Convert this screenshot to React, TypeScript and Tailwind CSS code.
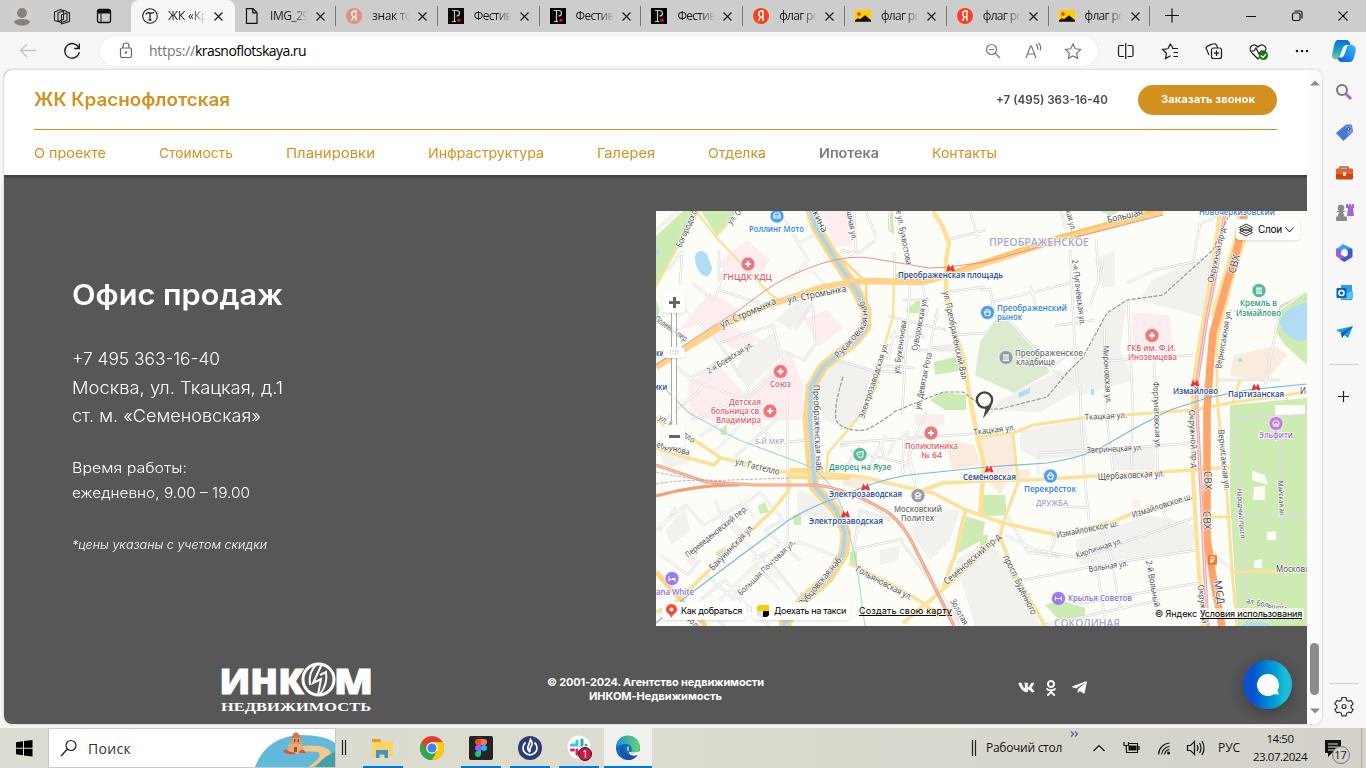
import { useLayoutEffect, useRef } from 'react';
import type { ReactNode } from 'react';
import { FaVk, FaOdnoklassniki, FaTelegramPlane } from 'react-icons/fa';

/* Text set to a given line width by spreading the letters */
function Fit({ w, children, className = '' }: { w: number; children: string; className?: string }) {
  const ref = useRef<HTMLSpanElement>(null);
  useLayoutEffect(() => {
    const el = ref.current;
    if (!el) return;
    const apply = () => {
      el.style.letterSpacing = '0px';
      el.style.letterSpacing = `${(w - el.getBoundingClientRect().width) / children.length}px`;
    };
    apply();
    document.fonts.ready.then(apply);
  }, [w, children]);
  return <span ref={ref} className={`inline-block whitespace-nowrap ${className}`}>{children}</span>;
}

/* Text set to a given line width by widening the letters themselves */
function Wide({ w, children, className = '' }: { w: number; children: string; className?: string }) {
  const ref = useRef<HTMLSpanElement>(null);
  useLayoutEffect(() => {
    const el = ref.current;
    if (!el) return;
    const apply = () => {
      el.style.transform = 'none';
      el.style.marginRight = '0px';
      const own = el.getBoundingClientRect().width;
      el.style.transform = `scaleX(${w / own})`;
      el.style.marginRight = `${w - own}px`;
    };
    apply();
    document.fonts.ready.then(apply);
  }, [w, children]);
  return (
    <span className={`flex ${className}`}>
      <span ref={ref} className="inline-block origin-left whitespace-nowrap">{children}</span>
    </span>
  );
}

const Cross = ({ s = 9 }: { s?: number }) => (
  <svg width={s} height={s} viewBox="0 0 9 9" className="shrink-0"><path d="M.5 .5l8 8M8.5 .5l-8 8" stroke="#1b1b1b" strokeWidth="1.2" /></svg>
);

const FavT = () => (
  <svg width="16" height="16" viewBox="0 0 16 16"><circle cx="8" cy="8" r="7.3" fill="none" stroke="#222" strokeWidth="1.1" /><path d="M4 6.500c.5-2 2-2 4-1.500s3 .5 4-1M8 5.500V12M6.500 12h3" fill="none" stroke="#222" strokeWidth="1.300" /></svg>
);
const FavFile = () => (
  <svg width="16" height="16" viewBox="0 0 16 16"><path d="M2.500.7h6.500l4 4v10.600h-10.500zM8.800.7v4.200H13" fill="none" stroke="#111" strokeWidth="1.200" /></svg>
);
const FavYa = ({ dim = false }: { dim?: boolean }) => (
  <svg width="16" height="16" viewBox="0 0 16 16"><circle cx="8" cy="8" r="8" fill={dim ? '#e0917f' : '#fc3f1d'} /><path d="M9.900 13V3H8.600C6.700 3 5.700 4.200 5.700 5.900c0 1.400.6 2.200 1.800 3L5.300 13M7.500 8.900h2.400" fill="none" stroke={dim ? '#eee' : '#fff'} strokeWidth="1.500" /></svg>
);
const FavP = () => (
  <svg width="16" height="16" viewBox="0 0 16 16"><path fill="#000" d="M0 0h16v16H0z" /><path d="M6.500 2.500v11M4 2.500h4.500c4 0 4 5.500 0 5.500M4 13.500h4" fill="none" stroke="#ccc" strokeWidth="1.200" /><circle cx="11" cy="12.300" r="1.700" fill="#f01010" /></svg>
);
const FavImg = () => (
  <svg width="16" height="16" viewBox="0 0 16 16"><path fill="#fc0" d="M0 2h16v12H0z" /><path d="M0 13.800v-1.500l3-2 2 1 5-4 6 5v1.500z" fill="#111" /><circle cx="4" cy="6" r="1.700" fill="#f02a10" /></svg>
);

const tabs: { icon: ReactNode; t: string; w: number }[] = [
  { icon: <FavYa dim />, t: 'знак то', w: 40 },
  { icon: <FavP />, t: 'Фестив', w: 38 },
  { icon: <FavP />, t: 'Фестив', w: 38 },
  { icon: <FavP />, t: 'Фестив', w: 38 },
  { icon: <FavYa />, t: 'флаг ро', w: 40 },
  { icon: <FavImg />, t: 'флаг ро', w: 40 },
  { icon: <FavYa />, t: 'флаг ро', w: 40 },
  { icon: <FavImg />, t: 'флаг ро', w: 40 },
];

function TabLabel({ t, w }: { t: string; w: number }) {
  return (
    <span className="w-[38px] overflow-hidden bg-gradient-to-r from-[#1b1b1b] from-60% to-transparent bg-clip-text text-[12px] leading-5 text-transparent">
      <Fit w={w}>{t}</Fit>
    </span>
  );
}

function TabStrip() {
  return (
    <div className="flex h-8 items-center bg-[#cdcdcd]">
      <svg width="131" height="32" viewBox="0 0 131 32" className="shrink-0">
        <circle cx="22" cy="16" r="10.500" fill="#d3cfcb" /><circle cx="22" cy="13" r="5" fill="#87827e" /><path d="M14 22c0-4 16-4 16 0-3 5-13 5-16 0z" fill="#87827e" />
        <g fill="#cdcdcd" stroke="#222" strokeWidth="1.100" strokeLinejoin="round"><path d="M54.500 12l6-2.500 3 1v9l-6 2-3-1zM58 13l6-2.500 3 1v9l-6 2-3-1zM61.500 14.500l8-2v9l-8 2.500z" /></g>
        <rect x="97.500" y="9.500" width="13" height="13" rx="2" fill="none" stroke="#111" strokeWidth="1.300" /><path d="M97 10h14v3.500H97z" fill="#111" /><path d="M101 13v9" stroke="#111" />
      </svg>
      <div className="flex h-8 w-[104px] shrink-0 items-center rounded-t-lg bg-[#f7f7f7] pl-[11px]">
        <FavT /><span className="w-[10px]" /><TabLabel t="ЖК «Кр" w={40} /><span className="w-2" /><Cross />
      </div>
      <div className="flex h-8 w-[100px] shrink-0 items-center pl-[9px]">
        <FavFile /><span className="w-[10px]" /><TabLabel t="IMG_29" w={39} /><span className="w-[8px]" /><Cross />
      </div>
      {tabs.map((tab, i) => (
        <div key={i} className="flex h-8 w-[101.800px] shrink-0 items-center">
          <span className="h-5 w-px bg-[#777]" /><span className="w-[10px]" />{tab.icon}<span className="w-[10px]" /><TabLabel t={tab.t} w={tab.w} /><span className="w-2" /><Cross />
        </div>
      ))}
      <span className="h-5 w-px bg-[#777]" />
      <svg width="216" height="32" viewBox="1150 0 216 32" className="shrink-0" fill="none" stroke="#111" strokeWidth="1.200">
        <path d="M1165 15.500h14M1172 8.500v14M1246 16.500h10M1338.500 11.500l9 9M1347.500 11.500l-9 9" />
        <rect x="1292.500" y="13" width="7.500" height="7.500" rx="1.500" /><path d="M1294.500 11h5.500c1.500 0 2 .5 2 2v5.500" />
      </svg>
    </div>
  );
}

const Copilot = () => (
  <>
    <path d="M1338 40h8c3 0 4 2 4.500 5h-4c-2 0-3 1-4 4l-3 8c-1 2-2 2.500-3.500 2.500-4 0-4.500-3-3.500-7 1.500-6 2-12.500 5.500-12.500z" fill="url(#cpA)" />
    <path d="M1350 62h-8c-3 0-4-2-4.500-4.500h3c2.500 0 3.500-1.500 4.500-4.500l2-6c.7-1.500 2-2 3.500-2 4.500 0 6 2.500 5 7-1.500 6-2.500 10-5.500 10z" fill="url(#cpB)" />
    <defs>
      <linearGradient id="cpA" x1="0" y1="0" x2="0" y2="1"><stop offset="0" stopColor="#0b6cd8" /><stop offset=".55" stopColor="#19a7c8" /><stop offset="1" stopColor="#7ed37e" /></linearGradient>
      <linearGradient id="cpB" x1="0" y1="1" x2="1" y2="0"><stop offset="0" stopColor="#0a55e0" /><stop offset="1" stopColor="#31c3f4" /></linearGradient>
    </defs>
  </>
);

function Toolbar() {
  return (
    <div className="flex h-[38px] items-center bg-[#f7f7f7]">
      <svg width="100" height="38" viewBox="0 32 100 38" className="shrink-0" fill="none" strokeWidth="1.300">
        <path d="M21 50.500h15M27 44l-6.500 6.500L27 57" stroke="#c4c4c4" />
        <path d="M79 48.500a7.300 7.300 0 1 0 .3 3.500M79.300 43.500v5h-5" stroke="#1b1b1b" />
      </svg>
      <div className="flex h-[30px] w-[998px] shrink-0 items-center rounded-full bg-white shadow-[0_0_2px_#ddd]">
        <svg width="49" height="30" viewBox="100 36 49 30" className="shrink-0" fill="none" stroke="#666" strokeWidth="1.200"><rect x="120.500" y="48" width="11" height="9.500" rx="1.500" /><path d="M123 48v-2a3 3 0 0 1 6 0v2" /><circle cx="126" cy="52.500" r=".6" fill="#444" /></svg>
        <span className="flex text-[14px] leading-5 text-[#777]"><Fit w={46}>https://</Fit><Fit w={111} className="text-black">krasnoflotskaya.ru</Fit></span>
        <svg width="113" height="30" viewBox="985 36 113 30" className="ml-auto shrink-0" fill="none" stroke="#777" strokeWidth="1.200">
          <circle cx="991.500" cy="49.500" r="5" /><path d="M995 53l5 5M989 49.500h5" />
          <path d="M1026 58l4.500-12h1l4.500 12M1028 54h7M1036 44c2 2 2 4 1.500 5.500M1038.500 43c2.500 2.500 2.500 5.500 1.500 7.500" />
          <path d="M1073 44l2.300 4.800 5.200.7-3.800 3.700.9 5.200-4.600-2.500-4.600 2.500.9-5.200-3.800-3.700 5.200-.7z" />
        </svg>
      </div>
      <svg width="268" height="38" viewBox="1098 32 268 38" className="shrink-0" fill="none" stroke="#1b1b1b" strokeWidth="1.200">
        <path d="M1124 45.500h-4c-1 0-1.500.5-1.500 1.500v8c0 1 .5 1.500 1.500 1.500h4M1127.500 45.500h4c1 0 1.500.5 1.500 1.500v8c0 1-.5 1.500-1.500 1.500h-4M1125.700 43v16" />
        <path d="M1172 48.500h6M1173.500 52.500h4.500M1173.500 56.500h4.500M1173 48l-2.800-4-2.200 4.800-5.500.7 4 3.700-1 5.300 5-2.700" />
        <path d="M1209 55l-3-7c0-2 8-5 9.500-4s2 3 2 4" /><rect x="1211.500" y="48" width="10" height="10.500" rx="2" /><path d="M1216.500 50.500v5.500M1213.800 53.200h5.500" />
        <path d="M1258 59l-6-6c-5-5 1-11 6-6 5-5 11 1 6 6zM1250 51h4l2-3 3 6 2-3h5" />
        <circle cx="1263.500" cy="55.500" r="4.500" fill="#107c10" stroke="none" /><path d="M1261 55.500l2 2 3-3.500" stroke="#fff" />
        <g fill="#1b1b1b" stroke="none"><circle cx="1297" cy="51" r="1.300" /><circle cx="1302" cy="51" r="1.300" /><circle cx="1307" cy="51" r="1.300" /></g>
        <g stroke="none"><Copilot /></g>
      </svg>
    </div>
  );
}

/* ---------- map ---------- */
type L = [text: string, x: number, y: number, w: number, rot?: number, size?: number];
const street: L[] = [
  ['ул. Стромынка', 722, 328, 60, -24, 9.5], ['ул. Стромынка', 788, 303, 60, -11, 9.5], ['Богородское', 681, 248, 44, -66], ['ул. Ос', 731, 225, 20, -50],
  ['пкина', 810, 207, 29, 65, 9], ['Полевой пер.', 654, 320, 39, 35], ['2-я Боевская ул.', 709, 374, 53, -32],
  ['ошная ул.', 846, 208, 33, 80], ['е ул. Бухвостова', 896, 211, 55, 79],
  ['ул. Буженинова', 899, 374, 54, -82], ['Суворовская ул.', 917, 351, 54, -79], ['ул. Девятая Рота', 920, 410, 58, -78],
  ['Электрозаводская ул.', 864, 419, 79, -72], ['ул. Преображенский Вал', 943, 292, 90, 78, 8.5],
  ['Большая', 1108, 223, 36, -13, 9], ['2-я Пугачёвская ул.', 1072, 260, 66, 83], ['ская ул.', 1065, 208, 24, 76], ['Мироновская ул.', 1103, 346, 58, 87],
  ['Фортунатовская ул.', 1153, 382, 67, 88], ['Ткацкая ул.', 1085, 420, 42, -3], ['Ткацкая ул.', 974, 435, 42, -7],
  ['Зверинецкая ул.', 1087, 453, 56, -3], ['Щербаковская ул.', 1098, 480, 67, -3, 9], ['Измайловское ш.', 1133, 518, 63, -18, 8.5],
  ['Измайловское ш.', 1057, 538, 63, -11, 8.5], ['Кирпичная ул.', 1077, 558, 48, -18], ['Вольная ул.', 1089, 572, 40, -9], ['2-й Вольный п', 1146, 561, 54, 80],
  ['просп. Будённого', 1003, 557, 65, 64, 9], ['Семёновский пр-д', 947, 585, 72, -41, 9], ['Золотая', 950, 601, 28, 61],
  ['Гольяновская ул.', 855, 571, 63, 28, 8.5], ['ул. Гастелло', 735, 464, 45, 14, 8.5], ['ул. Гастелло', 658, 419, 42, 35], ['ебрунова', 656, 447, 34, 14],
  ['Переведеновский пер.', 688, 558, 77, -39], ['Бакунинская ул.', 713, 571, 60, -46, 9], ['Большая Почтовая ул.', 741, 596, 76, -44],
  ['Рубцовская наб.', 803, 607, 63, -50, 9], ['Окружной пр-д', 1213, 283, 56, -77], ['СВХ', 1235, 274, 19, -75, 10],
  ['Вернисажная ул.', 1221, 369, 60, -80], ['Окружной пр-д', 1189, 410, 58, 87], ['Вернисажная ул.', 1218, 430, 61, 84, 8.5],
  ['СВХ', 1204, 471, 19, 88, 10], ['СВХ', 1203, 511, 19, 87, 10], ['МСД', 1214, 581, 24, 81, 10], ['Окружной', 1198, 585, 39, 84],
  ['Народный просп.', 1237, 489, 51, 86, 7], ['Майская ал.', 1278, 481, 36, 87, 7], ['Московс', 1276, 572, 33, 0], ['ал. Большого', 1246, 603, 42, 12, 7.5], ['И', 1300, 394, 6],
  ['Большая', 686, 619, 30, 45],
];
const poi: [string, number, number, number, string, number?][] = [
  ['Роллинг Мото', 749, 232, 55, '#2f86dc'], ['ГНЦДК КДЦ', 723, 280, 49, '#e8606a'], ['Союз', 770, 387, 21, '#e8606a'],
  ['Детская', 729, 405, 32, '#e8606a'], ['больница св.', 711, 414, 50, '#e8606a'], ['Владимира', 716, 423, 45, '#e8606a'],
  ['ПРЕОБРАЖЕНСКОЕ', 989, 246, 100, '#a9a6cb', 10], ['Преображенский', 997, 311, 70, '#2f86dc'], ['рынок', 997, 320, 25, '#2f86dc'],
  ['Преображенское', 1015, 356, 68, '#6f7378'], ['кладбище', 1016, 365, 39, '#6f7378'], ['ГКБ им. Ф.И.', 1127, 351, 49, '#e8606a'], ['Иноземцева', 1128, 360, 49, '#e8606a'],
  ['Новочеркизовский', 1199, 215, 76, '#3d7fd6'], ['Кремль в', 1240, 306, 37, '#2a9d7b'], ['Измайлово', 1236, 316, 45, '#2a9d7b'],
  ['Поликлиника', 905, 449, 53, '#e8606a'], ['№ 64', 921, 458, 21, '#e8606a'], ['Дворец на Яузе', 829, 470, 62, '#2a9d7b'],
  ['Московский', 894, 512, 48, '#6f7378'], ['Политех', 901, 521, 33, '#6f7378'], ['5-Й МКР.', 755, 444, 31, '#a9a6cb', 7.5],
  ['Перекрёсток', 1024, 492, 52, '#2f86dc'], ['ДРУЖБА', 1036, 506, 32, '#a9a6cb', 8], ['Крылья Советов', 1068, 601, 64, '#8a6be8'],
  ['СОКОЛИНАЯ', 1054, 627, 66, '#a9a6cb', 10], ['Эльфити', 1259, 438, 34, '#b066d6'], ['ana White', 656, 595, 38, '#8a6be8'],
];
const metro: [string, number, number, number][] = [
  ['Преображенская площадь', 898, 278, 105], ['Электрозаводская', 829, 497, 73], ['Электрозаводская', 809, 524, 74], ['Семёновская', 963, 480, 53],
  ['Измайлово', 1173, 394, 45], ['Партизанская', 1228, 397, 56], ['ки', 656, 356, 8], ['ики', 654, 390, 13],
];
const pins: [number, number, string, string][] = [
  [777, 216, '#4f9fee', 'car'], [748, 264, '#f0747c', 'plus'], [780.5, 371.5, '#f0747c', 'plus'], [770, 411, '#f0747c', 'plus'], [931, 433, '#f0747c', 'plus'], [1152, 335.5, '#f0747c', 'plus'],
  [987.5, 312.5, '#4f9fee', 'bag'], [1050.5, 476, '#4f9fee', 'bag'], [1006, 357.5, '#979ba3', 'col'], [918, 495.5, '#979ba3', 'cap'], [1259, 290.5, '#55b99c', 'col'], [860, 454.5, '#55b99c', 'mask'],
  [1058.5, 598.5, '#9a7bf5', 'gym'], [672, 578.5, '#9a7bf5', 'bed'], [1276, 423.5, '#c07be6', 'wheel'],
];
const glyph: Record<string, string> = {
  plus: 'M-3 0H3M0-3V3', car: 'M-3 2V-1L-2-3H2L3-1V2ZM-3 0H3', bag: 'M-3-.5H3L2 3H-2ZM-2-1L-1-3H1L2-1', col: 'M-3-2.500H3M-3 3H3M-2-2V3M0-2V3M2-2V3',
  cap: 'M-3-1L0-3L3-1L0 1ZM-2 0V3H2V0', mask: 'M-3-2L3-3V1Q2 4 0 3Q-3 2-3-2M-1-.5H1', gym: 'M-3 0H3M-3-2V2M3-2V2', bed: 'M-3-2V3M-3 1H3V3M0 0H3V1', wheel: 'M-2.500 3L0 0L2.500 3M0-3A3 3 0 1 1-.1-3',
};
const minor = [
  'M656 230L678 211M668 270L682 252L680 285M682 307L719 343L741 377M692 283L714 300M724 270L716 297M719 250L719 290L769 306M783 216L808 260L789 280M798 243L818 233L812 211M849 255L856 250L854 211M811 270L830 290M795 330L813 303M775 332L780 350L804 360L815 345L813 305M720 343L773 325L782 360M656 350L692 380L745 400L786 365M690 378L724 360M692 420L743 400L750 385M665 420L700 390M742 403L780 450M700 436L740 410M716 450L760 405M734 458L778 418M787 398L788 545M810 440L787 442',
  'M838 262L842 250L856 254M837 360L870 370L904 373M850 255L862 251L876 240M866 211L876 237M889 211L890 230M894 252L895 283M910 285L902 415M922 283L928 310L917 330M888 316L946 330M889 337L925 337M885 366L915 368M895 330L888 360M938 308L920 395M915 350L955 350M930 348L960 345M902 300L930 300M946 292L985 287M947 240L986 230M950 335L990 333M970 211L978 238M1061 211L1066 230M1070 250L1075 350L1078 385M1096 240L1099 280L1090 305M980 290L990 289L995 318M992 302L1070 283M1036 307L1030 285M1054 326L1095 320M1005 316L1055 372L1080 385L1081 420L1084 470L1089 520M1055 365L1078 345M1104 320L1106 410L1114 480M1107 361L1193 355M1128 300L1133 410L1131 470M1154 360L1158 480M1127 283L1155 270L1193 262L1200 224L1225 213M1131 357L1150 359M1233 311L1265 310M1265 385L1280 310L1305 292M1100 275L1103 260M1216 380L1280 380',
  'M840 443L985 433M850 450L910 465L918 495M860 446L848 465M880 440L884 460M896 438L888 455M904 437L902 473M840 446L850 444M886 435L870 465M905 435L915 480M903 472L926 411M1038 453L1038 475M1038 453L1140 447L1193 443M1005 512L1028 552L1060 557M1005 535L1035 550L1080 558L1193 518M1050 528L1055 540L1049 555M1102 527L1112 560L1120 610M1024 580L1100 565L1197 550M1073 605L1197 583M1146 560L1158 606M1040 626L1160 600M1045 505L1090 508M1162 507L1168 525M1097 568L1106 626M1210 550L1232 570',
  'M656 530L686 505L704 525L750 500L760 492L783 520L765 530L800 560M660 555L688 575L700 560M676 507L660 530M716 500L720 515L780 580M722 510L745 535M740 500L755 518M797 541L838 557M802 543L776 545L720 600M790 540L752 560M769 560L809 610M700 600L725 580L750 610M700 606L725 626M735 595L770 626M851 550L903 539M854 548L860 510L890 520M915 550L960 626M900 540L960 620M860 500L905 525M705 574L735 600M757 566L780 590',
];

function MapCanvas() {
  return (
    <svg width="651" height="415" viewBox="656 211 651 415" className="block" fontFamily='"Open Sans","Noto Sans",sans-serif'>
      <path fill="#fdfdf8" d="M656 211h651v415H656z" />
      <g fill="#f1f1ee">
        <path d="M745 350L775 332L783 355L748 388L735 372ZM775 320L800 300L812 303L803 318L790 330ZM838 360L878 370L862 415L845 430L825 420L812 390ZM1083 357L1107 313L1127 300L1120 350L1135 380L1081 395L1060 375ZM1152 280L1195 260L1220 250L1213 320L1140 300ZM1015 392L1060 370L1080 390L1040 412L985 410ZM1020 430L1085 420L1090 455L1040 460L1020 450ZM1075 540L1150 515L1195 525L1193 550L1080 565ZM955 560L990 540L1030 600L1040 626H975ZM656 440L695 460L665 470ZM665 530L685 508L690 530L672 545ZM1095 260L1115 250V287L1102 288ZM1110 450L1155 446V470H1112ZM880 550L900 545L898 560L880 565ZM917 500L935 510L960 510L950 540L930 560L912 535ZM1242 500L1265 497V515H1243Z" />
        <path d="M797 490L830 500L835 520L798 515Z" />
      </g>
      <g fill="#cdebb2">
        <path d="M656 236L683 211H698L677 250L656 285ZM701 211H738L716 235ZM1230 405L1307 398V626H1238L1230 500ZM888 215L893 211L894 235L888 230ZM893 275L905 270L906 285H893ZM906 310L920 298V313H907ZM934 362L962 355L965 370L935 375ZM930 400L942 392L966 395V410L945 410ZM758 506L765 502L769 512L760 514ZM715 553L725 547L727 556L719 558ZM793 515L801 514V525H794ZM720 430L727 424V435H721ZM962 515L985 522L982 540L953 556ZM980 495L1005 495L1007 515L980 517ZM980 535L988 535L987 550L980 553ZM1045 605L1060 600L1085 608V618L1060 621ZM850 552L857 551V565H850ZM1275 330L1280 305L1307 292V365L1285 345ZM1100 211H1120L1110 216ZM656 300L660 310L656 325ZM779 620L786 612L792 626H779Z" />
        <path d="M980 342L995 320H1010L1038 350L1050 372L1014 393L975 375Z" fill="#dcebd0" />
      </g>
      <g fill="#fdedef">
        <path d="M716 263L747 240L770 260L763 272L730 276ZM679 330L710 292L740 310L730 325L762 340L733 350L700 325ZM803 318L828 310L843 328L818 347ZM688 385L715 360L745 395L790 350L803 385V420H690ZM820 211H850L852 245L835 247ZM1132 312L1170 315L1174 355L1133 352ZM685 560L697 553V562L692 566ZM1132 500H1140V508H1132ZM900 432L910 430V440H902ZM915 414H945L944 425H916Z" />
      </g>
      <g fill="#faecdd"><path d="M980 437L1012 435L1015 465L1000 495L980 470ZM845 476L875 478L862 490L842 485ZM1234 355L1275 346L1287 355L1265 382L1230 375ZM945 440L975 445L980 465L952 470ZM1018 470H1030V478H1019Z" /></g>
      <g fill="#b2dcf4"><path d="M695 257Q698 247 707 254L712 268Q709 280 703 275Q695 270 695 257ZM1280 325Q1279 310 1307 302V340Q1290 344 1280 325ZM1018 393L1030 388V393L1019 398ZM1091 389H1094V395H1091ZM1238 358H1242V362H1238ZM1240 626Q1255 617 1272 626ZM656 249Q662 249 659 254L656 255Z" /></g>
      <g fill="#fdfdf8"><path d="M1252 471L1265 475L1268 485L1252 480ZM1254 487L1265 486V500H1253ZM1267 532L1276 531V540H1267ZM1254 561L1262 559V568H1254ZM1275 405H1305V415H1275Z" /></g>
      {minor.map((d, i) => <path key={i} d={d} fill="none" stroke="#d6d7d8" strokeWidth="2.400" strokeLinejoin="round" />)}
      {minor.map((d, i) => <path key={`w${i}`} d={d} fill="none" stroke="#fff" strokeWidth="1.200" strokeLinejoin="round" />)}
      <g fill="none" stroke="#dcdcdc" strokeWidth="1.800"><path d="M1236 417L1247 600M1280 440L1284 570M1230 517L1307 515M1236 417L1307 415" /></g>
      <g fill="none" stroke="#fbe19a" strokeWidth="3.600" strokeLinejoin="round">
        <path d="M696 211L716 237L769 293L783 303M716 237L728 223M699 211L676 250L656 287" strokeWidth="2.200" />
        <path d="M894 283L893 317L884 347L876 387L859 417L828 453L826 475" strokeWidth="2.600" />
        <path d="M933 211L943 227L949 243L946 260L946 290L953 327L964 360L969 393L978 440L984 463L980 517" strokeWidth="4.500" />
        <path d="M656 417L669 430L699 443L721 458L789 473L823 473L863 477L896 485L933 493L966 510L1003 523L1057 535L1113 522L1133 513L1197 497M656 448L689 458L714 465L721 457M923 490L943 483L986 481L1030 480L1193 470L1232 467" />
        <path d="M789 473L789 490L773 510L723 557L673 605L656 612M849 563L889 583L923 603L939 616M903 623L946 587L986 550L1000 537M966 510L956 553L943 587M1003 523L1000 537L1013 570L1045 626" />
        <path d="M976 437L1013 433L1033 425L1083 418L1193 410L1230 403L1307 392M1013 433L1018 483L1003 523M1232 572L1307 571M1209 517L1230 517M1233 403L1240 380" strokeWidth="3" />
        <path d="M1220 213L1210 283L1200 340L1193 387V477L1197 543L1203 626" strokeWidth="4.200" />
        <path d="M1247 233L1233 277L1217 340V387L1218 410L1227 493L1232 570L1237 626M1240 211L1235 240L1212 316" strokeWidth="3" />
      </g>
      <path d="M790 470H823M790 477L850 478" fill="none" stroke="#fbdc8c" strokeWidth="4" />
      <path d="M656 367L723 325L769 305L823 287L863 281L923 282L951 274L1060 239L1163 211" fill="none" stroke="#fcd38a" strokeWidth="6.500" />
      <path d="M940 276L951 272L1060 236L1163 208" fill="none" stroke="#ffc368" strokeWidth="2.500" />
      <path d="M656 572L683 602L706 626" fill="none" stroke="#fcd38a" strokeWidth="5" />
      <path d="M809 205L816 227L836 260L856 290L866 310L866 327L856 340L823 367L811 387L808 420L811 460L814 487L836 510L846 533L844 553L829 577L803 600L783 626" fill="none" stroke="#fbd68c" strokeWidth="10.500" strokeLinejoin="round" />
      <path d="M809 205L816 227L836 260L856 290L866 310L866 327L856 340L823 367L811 387L810 420L813 460L815 487L836 510L845 533L843 553L828 577L803 600L783 626" fill="none" stroke="#a9d5ef" strokeWidth="4" strokeLinejoin="round" />
      <path d="M843 260L863 279M866 281L867 315" stroke="#fbd68c" strokeWidth="2.500" />
      <path d="M845 281H882" stroke="#fcd38a" strokeWidth="5" />
      <path d="M656 365L689 342L739 310L766 290Q789 274 823 263Q849 255 870 258L929 268L949 267L986 262L1060 241L1163 215" fill="none" stroke="#f08d87" strokeWidth="1" />
      <g fill="none" stroke="#f0a080" strokeWidth="3.200"><path d="M656 465L706 482L756 485H816Q850 489 889 513Q905 526 916 550L954 626" /><path d="M656 496Q700 484 740 485" /></g>
      <path d="M656 465L706 482L756 485H816Q850 489 889 513Q905 526 916 550L954 626" fill="none" stroke="#fbd0bc" strokeWidth=".9" />
      <path d="M656 472Q700 482 730 480L790 478M656 484Q690 478 725 482" fill="none" stroke="#aaa" strokeWidth=".9" strokeDasharray="3 1.500" />
      <path d="M1245 211L1237 250L1227 283L1213 333L1210 367L1207 410V537L1213 577L1222 626" fill="none" stroke="#ffa46b" strokeWidth="7.500" />
      <path d="M1225 211L1217 267L1207 317L1197 383V410L1202 510L1205 577L1208 626" fill="none" stroke="#f3a3a3" strokeWidth="3.400" />
      <path d="M1225 211L1217 267L1207 317L1197 383V410L1202 510L1205 577L1208 626" fill="none" stroke="#fde0e0" strokeWidth="1" />
      <path d="M656 623L686 597L739 557L789 520Q810 507 836 498L869 485Q890 478 909 475L987 467L1047 463Q1075 459 1097 450L1137 427L1170 410L1207 398L1247 390L1307 384" fill="none" stroke="#7db8de" strokeWidth="1.200" />
      <path d="M666 390L689 413L739 440L806 465Q829 475 843 510L856 560L865 626" fill="none" stroke="#a5d6da" strokeWidth="1.100" />
      <path d="M843 377Q834 405 836 420Q843 432 866 430Q880 423 896 411L923 400L943 392H963L986 409L1000 409L1047 397L1067 373L1083 357L1107 313L1127 300L1163 295L1213 250L1228 217" fill="none" stroke="#999" strokeWidth="1.200" strokeDasharray="4 1.500" />
      <path id="rus" d="M838 359Q854 341 863 331Q873 316 861 296" fill="none" />
      <g stroke="#fff" strokeWidth="1.500" strokeLinejoin="round" paintOrder="stroke">
        <g fill="#3d4347" fontSize="8">
          {street.map(([t, x, y, w, r = 0, s = 8], i) => (
            <text key={i} x={x} y={y} fontSize={s + 0.3} textLength={w} lengthAdjust="spacingAndGlyphs" transform={`rotate(${r} ${x} ${y})`}>{t}</text>
          ))}
          <text fontSize="9" textLength="72"><textPath href="#rus">Русаковская наб.</textPath></text>
          <text fontSize="9" x="813" y="385" textLength="88" lengthAdjust="spacingAndGlyphs" transform="rotate(88 813 385)">Преображенская наб.</text>
        </g>
        <g fontWeight="600">
          {poi.map(([t, x, y, w, c, s = 8.2], i) => <text key={i} x={x} y={y} fill={c} fontSize={s} textLength={w} lengthAdjust="spacingAndGlyphs">{t}</text>)}
          {metro.map(([t, x, y, w], i) => <text key={i} x={x} y={y} fill="#21499c" fontSize="8.200" textLength={w} lengthAdjust="spacingAndGlyphs">{t}</text>)}
        </g>
      </g>
      {[[950.5, 268], [865.5, 487], [845.5, 514], [989, 469], [1195, 383], [1256, 387]].map(([x, y]) => (
        <path key={x} d={`M${x - 4.5} ${y + 3.2}L${x - 2} ${y - 3.5}L${x} ${y}L${x + 2} ${y - 3.5}L${x + 4.5} ${y + 3.2}H${x + 1.6}L${x} ${y + 1.8}L${x - 1.6} ${y + 3.2}Z`} fill="#ee3038" />
      ))}
      {pins.map(([x, y, c, g], i) => (
        <g key={i} transform={`translate(${x} ${y})`}><circle r="7" fill={c} stroke="#fff" strokeWidth=".6" /><path d={glyph[g]} fill="none" stroke="#fff" strokeWidth={g === 'plus' ? 1.9 : 1.1} /></g>
      ))}
      <rect x="1208" y="555" width="9" height="10" rx="1.500" fill="#ff7434" /><path d="M1211 563V557H1214V560H1211M1210 561.500H1214" fill="none" stroke="#fff" strokeWidth="1" />
      <path d="M984 418L1003 402L990 414Z" fill="#555" opacity=".3" />
      <path d="M986 407L992 405Q989 412 983 418.500Z" fill="#41483e" /><circle cx="984.500" cy="400" r="7.600" fill="#fff" stroke="#41483e" strokeWidth="2.400" />
    </svg>
  );
}

function YandexMap() {
  return (
    <div className="relative h-[415px] w-[651px] overflow-hidden">
      <MapCanvas />
      <div className="absolute left-[15px] top-[102px] h-[114px] w-[6px] border-x border-[#aaa] bg-white/70" />
      <div className="absolute left-[7px] top-[80px] flex h-[22px] w-[22px] items-center justify-center rounded-sm bg-white shadow"><svg width="11" height="11" viewBox="0 0 11 11"><path d="M0 5.500h11M5.500 0v11" stroke="#666" strokeWidth="3" /></svg></div>
      <div className="absolute left-[7px] top-[136px] flex h-[11px] w-[22px] items-center justify-center rounded-sm bg-white shadow"><svg width="9" height="5" viewBox="0 0 9 5"><path d="M0 1h9M0 4h9" stroke="#999" strokeDasharray="1 1.500" /></svg></div>
      <div className="absolute left-[7px] top-[214px] flex h-[22px] w-[22px] items-center justify-center rounded-sm bg-white shadow"><span className="h-[3px] w-[11px] bg-[#666]" /></div>
      <div className="absolute left-[580px] top-[8px] flex h-[21px] w-[64px] items-center rounded-sm bg-white pl-[3px] text-[10px] shadow">
        <svg width="14" height="14" viewBox="0 0 14 14" fill="#fff" stroke="#333"><path d="M.5 9.500L7 13l6.500-3.500L7 6zM.5 7L7 10.500 13.500 7 7 3.500zM.5 4.500L7 8l6.500-3.500L7 1z" /></svg>
        <span className="w-[5px]" /><Fit w={24}>Слои</Fit><span className="w-[3px]" /><svg width="9" height="6" viewBox="0 0 9 6"><path d="M.5.5l4 4.500 4-4.500" fill="none" stroke="#222" /></svg>
      </div>
      <div className="absolute left-[6px] top-[391px] flex h-[18px] w-[84px] items-center rounded-sm bg-white pl-1 text-[9px] shadow">
        <svg width="11" height="14" viewBox="0 0 11 14"><path d="M5.500 0a5.500 5.500 0 0 1 5.500 5.500c0 4-4.500 4-5.500 8.500C4.500 9.500 0 9.500 0 5.500A5.500 5.500 0 0 1 5.500 0z" fill="#ff4433" /><circle cx="5.500" cy="5.500" r="2" fill="#fff" /></svg>
        <span className="w-1" /><Fit w={61}>Как добраться</Fit>
      </div>
      <div className="absolute left-[96px] top-[391px] flex h-[18px] w-[98px] items-center rounded-sm bg-white pl-[5px] text-[9px] shadow">
        <svg width="12" height="12" viewBox="0 0 12 12"><path d="M2 0h10v6H0V2z" fill="#fc0" /><path d="M0 6h6v6H2L0 10z" fill="#e3e3e3" /><path d="M6 6h6v4l-2 2H6z" fill="#000" /></svg>
        <span className="w-[5px]" /><Fit w={72}>Доехать на такси</Fit>
      </div>
      <div className="absolute left-[203px] top-[394px] text-[9px] leading-3"><Fit w={93} className="underline">Создать свою карту</Fit></div>
      <div className="absolute left-[497px] top-[397px] flex gap-[3px] bg-white/70 px-[2px] text-[9px] leading-[11px]"><Fit w={42}>© Яндекс</Fit><Fit w={102} className="underline">Условия использования</Fit></div>
    </div>
  );
}

const nav: [string, number][] = [['О проекте', 72], ['Стоимость', 74], ['Планировки', 89], ['Инфраструктура', 116], ['Галерея', 58], ['Отделка', 58], ['Ипотека', 60], ['Контакты', 65]];

function Site() {
  return (
    <div className="flex h-[654px] w-[1303px] flex-col bg-[#575757] font-['Inter','Noto_Sans',sans-serif]">
      <header className="h-[106px] shrink-0 border-b border-[#444] bg-white px-[30px] text-[#d4911f] shadow-[0_1px_2px_rgba(0,0,0,.4)]">
        <div className="flex h-[60px] items-center border-b border-[#d4911f]">
          <Wide w={196} className="text-[18px] font-semibold leading-6">ЖК Краснофлотская</Wide>
          <Wide w={112} className="ml-auto pt-[3px] text-[11.500px] font-semibold text-[#4a4a4a]">+7 (495) 363-16-40</Wide>
          <button className="ml-[30px] flex h-[30px] w-[139px] items-center justify-center rounded-full bg-[#d4911f] text-[10.500px] font-bold text-white"><Wide w={94}>Заказать звонок</Wide></button>
        </div>
        <nav className="flex h-[47px] items-center gap-[53px] text-[13px]">
          {nav.map(([t, w]) => <Wide key={t} w={w} className={t === 'Ипотека' ? 'font-semibold text-[#7d7d7d]' : ''}>{t}</Wide>)}
        </nav>
      </header>
      <main className="flex h-[450px] shrink-0 justify-between pt-[35px]">
        <section className="flex flex-col items-start pl-[68px] pt-[66px] text-white">
          <Wide w={211} className="text-[28px] font-semibold leading-9">Офис продаж</Wide>
          <div className="mt-[32px] flex flex-col items-start text-[17.500px] font-light leading-[28.500px]">
            <Wide w={148}>+7 495 363-16-40</Wide><Wide w={211}>Москва, ул. Ткацкая, д.1</Wide><Wide w={189}>ст. м. «Семеновская»</Wide>
          </div>
          <div className="mt-[24px] flex flex-col items-start text-[14.500px] font-light leading-[25px]">
            <Wide w={115}>Время работы:</Wide><Wide w={178}>ежедневно, 9.00 – 19.00</Wide>
          </div>
          <Wide w={195} className="mt-[30px] text-[12px] font-light italic leading-5">*цены указаны с учетом скидки</Wide>
        </section>
        <YandexMap />
      </main>
      <footer className="flex grow items-start text-white">
        <svg width="152" height="52" viewBox="220 662 152 52" className="ml-[216px] mt-[36px]" fill="#fff">
          <g fontFamily='"Open Sans","Noto Sans",sans-serif' fontWeight="800" fontSize="35" stroke="#fff" strokeWidth="1">
            <text x="219.500" y="693.500" textLength="84" lengthAdjust="spacingAndGlyphs">ИНК</text>
            <text x="334" y="693.500" textLength="39" lengthAdjust="spacingAndGlyphs">М</text>
          </g>
          <circle cx="318.500" cy="679.500" r="15.500" fill="#575757" stroke="#fff" strokeWidth="3" />
          <path d="M322 664L313 683L321 679L318 695M317 664Q308 672 310 685M320 694Q328 684 326 672L320 675" fill="none" stroke="#fff" strokeWidth="2" />
          <text x="221" y="711" fontFamily='"Liberation Serif",serif' fontWeight="700" fontSize="13.500" textLength="150" lengthAdjust="spacingAndGlyphs">НЕДВИЖИМОСТЬ</text>
        </svg>
        <div className="ml-[175px] mt-[49px] flex flex-col items-center text-[11px] font-bold leading-[14px]">
          <Fit w={217}>© 2001-2024. Агентство недвижимости</Fit><Fit w={133}>ИНКОМ-Недвижимость</Fit>
        </div>
        <div className="ml-[254px] mt-[53px] flex items-center gap-[8px]">
          <FaVk size={17} /><FaOdnoklassniki size={16} /><FaTelegramPlane size={17} className="ml-1" />
        </div>
        <div className="ml-auto mr-[15px] mt-[34px] flex size-[49px] items-center justify-center rounded-full bg-gradient-to-r from-[#0a50cf] from-20% to-[#1cbdd4] to-85% shadow-[0_4px_14px_rgba(0,0,0,.3)]">
          <svg width="24" height="24" viewBox="0 0 24 24"><path d="M12 1a11 11 0 0 1 9.500 16.500L23 21.500Q19 21 17.500 21.500A11 11 0 1 1 12 1z" fill="#fff" /></svg>
        </div>
      </footer>
    </div>
  );
}

function Sidebar() {
  return (
    <svg width="44" height="658" viewBox="1322 70 44 658" className="shrink-0" fill="none">
      <circle cx="1342" cy="90" r="5" stroke="#777" strokeWidth="2" /><path d="M1346 94l5 5" stroke="#a26ad0" strokeWidth="2.800" />
      <path d="M1336.500 133l9.500-8h5.500l1 7-9 8.500z" fill="#4c79d8" strokeLinejoin="round" stroke="#4c79d8" /><path d="M1345 126l6.500-.5 1 6.500-4 3.500z" fill="#6a9af0" /><circle cx="1348.500" cy="129" r="1.400" fill="#fff" stroke="#234" />
      <path d="M1340 169v-2h8v2" stroke="#777" strokeWidth="1.500" /><rect x="1336" y="168.500" width="17" height="11" rx="1.500" fill="#cd4513" /><path d="M1336 169h17v5h-17z" fill="#e8632b" /><path d="M1343 172h3v4h-3z" fill="#ddd" />
      <path d="M1346 204v4h8v-4h-2v1.500h-1V204h-2v1.500h-1V204zM1348 208l-1 8h7l-1-8z" fill="#a269d6" /><circle cx="1341" cy="208" r="3.300" fill="#8a8a8a" /><path d="M1337 211.500h8M1339.500 212h3l1.500 5h2.500v3.500h-10V217h1.500z" fill="#8a8a8a" stroke="#8a8a8a" />
      <path d="M1336 249.500l7-5.500 9 4.500v5l-7-3.500-4 2.500-1 5-4-2.500z" fill="#35a5e6" /><path d="M1336 248.500v7.500l8 5.500 1-4.500-4.500-3v-5z" fill="#9b5fd8" /><path d="M1352.500 249v8l-8 5-4.500-2.500 7.500-4v-7z" fill="#4356c6" /><path d="M1341.500 250.500l3-2 3 2v4l-3 2-3-2z" fill="#f7f7f7" />
      <path d="M1341 285h11v15h-11z" fill="#28a0e4" /><path d="M1346 293l7-2v8h-12z" fill="#50c8f0" /><rect x="1336.500" y="288" width="10" height="10" rx="1" fill="#0b63bd" /><circle cx="1341.500" cy="293" r="2.500" stroke="#fff" strokeWidth="1.600" />
      <path d="M1336 330l17-4-5 12-4-3-2 3-1-5z" fill="#1f9ae0" /><path d="M1341 333l12-7-9 9-2 3z" fill="#0d5fa8" />
      <path d="M1330 364.500h28M1330 683.500h28" stroke="#ccc" /><path d="M1338 396.500h11M1343.500 391v11" stroke="#222" strokeWidth="1.200" />
      <path d="M1342 697.500h4l.6 2.600 2 1.200 2.500-.8 2 3.400-2 1.800v2l2 1.800-2 3.400-2.500-.8-2 1.200-.6 2.500h-4l-.6-2.500-2-1.200-2.500.8-2-3.400 2-1.800v-2l-2-1.800 2-3.400 2.500.8 2-1.200z" stroke="#333" strokeWidth="1.200" /><circle cx="1344" cy="706.500" r="2" stroke="#333" strokeWidth="1.200" />
    </svg>
  );
}

function TaskbarApps() {
  return (
    <svg width="317" height="40" viewBox="336 728 317 40" className="shrink-0">
      <path d="M604 728h48v40h-48z" fill="#f0f0ec" />
      <path d="M342.500 740v15M345.500 740v15" stroke="#222" strokeWidth="1.200" />
      <path d="M372 739h9l1 2.500h11v15.500h-21z" fill="#fdd567" /><path d="M372 739h8l1 3h-9z" fill="#d9a319" /><path d="M376 758v-8h12v8h-3.500v-3.500h-5V758z" fill="#3c93d6" />
      <g transform="translate(432 748)"><circle r="12" fill="#e33e2f" /><path d="M-10.400-6A12 12 0 0 0 0 12L5.200 3-5 3z" fill="#2da94f" /><path d="M10.400-6A12 12 0 0 1 0 12L5.200 3 0-6z" fill="#fdd008" /><circle r="5.800" fill="#fff" /><circle r="4.600" fill="#4381ee" /></g>
      <rect x="469" y="736" width="24" height="24" rx="2" fill="#242424" /><path d="M478 739H481v6h-3a3 3 0 0 1 0-6z" fill="#f24e1e" /><path d="M481 739h3a3 3 0 0 1 0 6H481z" fill="#ff7262" /><path d="M478 745H481v6h-3a3 3 0 0 1 0-6z" fill="#a259ff" /><circle cx="484" cy="748" r="3" fill="#1abcfe" /><path d="M478 751H481v3a3 3 0 1 1-3-3z" fill="#0acf83" />
      <circle cx="530" cy="748" r="12" fill="#2b3c78" /><path d="M525.500 742.500a7 7 0 1 0 9 0M530.500 739.500q3 4 .5 7-2 3-1 5.500-3-2.500-2-5.500 1.500-3 2.500-7z" fill="none" stroke="#fff" strokeWidth="1.700" />
      <circle cx="579" cy="747" r="11.500" fill="#fff" /><g strokeWidth="3" strokeLinecap="round"><path d="M577 741v4M571.500 745h4" stroke="#36c5f0" /><path d="M582 740v5M586 745h0" stroke="#2eb67d" /><path d="M577 750v4M571.500 750h2" stroke="#e01e5a" /><path d="M582 750h4" stroke="#ecb22e" /></g>
      <circle cx="585" cy="754" r="6.500" fill="#cd1550" stroke="#33131e" /><text x="585" y="758" textAnchor="middle" fontSize="10" fill="#fff" fontFamily='"Open Sans"'>1</text>
      <g transform="translate(628 748)"><defs><linearGradient id="eg" x1="0" x2="1"><stop stopColor="#1a8fdc" /><stop offset="1" stopColor="#64d866" /></linearGradient></defs><circle r="12" fill="#116bbf" /><path d="M-12 0A12 12 0 0 1 12-1C12 4 7 5.500 3 4 5 1 3-4-2-4-7-4-11-2-12 0z" fill="url(#eg)" /><path d="M-2-4C-8-1-5 9 9.500 7 7 10.500 4 12 0 12-9 10-10-3-2-4z" fill="#1c51a1" /><path d="M.5-2c-4 3 0 9 11.500 5 0 1.500-.5 3-2 4C3 9 1 6 .5 3z" fill="#f0f0ec" /></g>
      <path d="M363 767h40M461 767h40M510 767h40M559 767h40M604 767h48" stroke="#0078d7" strokeWidth="2" />
    </svg>
  );
}

function Taskbar() {
  return (
    <div className="flex h-10 bg-gradient-to-r from-[#dbdcd2] via-[#dcdcd0] to-[#d3d1ca] text-[#111]">
      <svg width="48" height="40" viewBox="0 728 48 40" className="shrink-0"><path d="M16 742.300l7-1v6.500h-7zM24 741.100l8.500-1.200v7.900H24zM16 748.700h7v6.500l-7-1zM24 748.700h8.500v7.800L24 755.400z" fill="#000" /></svg>
      <div className="flex w-[288px] shrink-0 items-center border border-[#c9c9c4] bg-white">
        <svg width="39" height="36" viewBox="49 730 39 36"><circle cx="71" cy="745.500" r="5" fill="none" stroke="#222" strokeWidth="1.200" /><path d="M67.500 749L61 756" stroke="#222" strokeWidth="1.300" /></svg>
        <Fit w={43} className="text-[14px] text-[#333]">Поиск</Fit>
        <svg width="80" height="38" viewBox="255 729 80 38" className="ml-auto shrink-0">
          <path d="M255 767Q266 737 300 735Q325 735 335 743V767z" fill="#63b9d9" /><path d="M284 751Q300 744 320 746Q336 750 328 757L313 767H308Q324 757 318 752Q305 751 284 751z" fill="#f0c98b" /><path d="M316 767Q322 757 335 752V767z" fill="#479fa8" />
          <path d="M289 743h13l2 9q-8 4-17 0z" fill="#e6ac78" /><path d="M291 737h10v7h-10z" fill="#dc9a66" /><path d="M292 738l1-4 3-2 3 2 1 4z" fill="#c97c4c" /><path d="M294 739h1.500v3H294zM297.500 739h1.500v3h-1.500zM294 747h3v5h-3z" fill="#945436" /><path d="M283 752q2-4 5-1.500 2 2 4 1.500 3 0 4 2-7 1-13-2zM299 753q1-4 5-3l2 3z" fill="#e0503c" />
        </svg>
      </div>
      <TaskbarApps />
      <div className="ml-auto flex items-center">
        <svg width="16" height="40" viewBox="970 728 16 40"><path d="M972.500 740v16M975.500 740v16" stroke="#222" strokeWidth="1.200" /></svg>
        <Fit w={76} className="text-[12px]">Рабочий стол</Fit>
        <svg width="156" height="40" viewBox="1062 728 156 40" fill="none" stroke="#111" strokeWidth="1.200">
          <path d="M1071 731.500l2.500 2.500-2.500 2.500M1075 731.500l2.500 2.500-2.500 2.500" stroke="#55539a" />
          <path d="M1093.500 751l5.500-5.500 5.500 5.500" />
          <rect x="1128.500" y="745.500" width="8" height="5" fill="#111" stroke="none" /><path d="M1129 743.500h8.500v9h-11v-3M1139 746v4M1124 742v3.500h4.500V742M1126.200 745.500v4" />
          <path d="M1158.500 754.500a12 12 0 0 1 11-11.500M1161.500 754.500a9 9 0 0 1 8-8M1164.500 754.500a6 6 0 0 1 5-5" /><circle cx="1168.500" cy="753" r="1.500" fill="#111" stroke="none" />
          <path d="M1187.500 745.500h3l4-4v13l-4-4h-3zM1197 745q2 3 0 6M1199.500 743q3 5 0 10M1202 741q4 7 0 14" />
        </svg>
        <Fit w={22} className="text-[12px]">РУС</Fit>
        <div className="ml-[13px] flex w-[54px] flex-col items-center text-[11.500px] leading-[18px]"><Fit w={27}>14:50</Fit><Fit w={54}>23.07.2024</Fit></div>
        <svg width="59" height="40" viewBox="1307 728 59 40"><path d="M1325 740h16v13h-9l-4 4v-4h-3z" fill="#111" /><path d="M1328 744h10M1328 747h10M1328 750h7" stroke="#ddd" /><circle cx="1341" cy="755" r="8.500" fill="#d3d1ca" stroke="#777" /><text x="1340.500" y="759" textAnchor="middle" fontSize="11" fill="#111">17</text><path d="M1361.500 728v40" stroke="#aaa" /></svg>
      </div>
    </div>
  );
}

export default function App() {
  return (
    <div className="flex h-[768px] w-[1366px] flex-col overflow-hidden bg-[#f7f7f7] font-['Open_Sans','Noto_Sans',sans-serif] text-black">
      <TabStrip />
      <Toolbar />
      <div className="flex h-[658px]">
        <div className="ml-1 flex h-[654px] w-[1318px] overflow-hidden rounded-lg shadow-[0_0_3px_#bbb]">
          <Site />
          <div className="flex w-[15px] flex-col items-center bg-[#fcfcfc] pt-[10px]">
            <svg width="10" height="6" viewBox="0 0 10 6"><path d="M0 5.500L5 .5l5 5z" fill="#8b8b8b" /></svg>
            <span className="mt-[557px] h-[52px] w-[9px] rounded-full bg-[#8b8b8b]" />
            <svg width="10" height="6" viewBox="0 0 10 6" className="mt-[13px]"><path d="M0 .5l5 5 5-5z" fill="#8b8b8b" /></svg>
          </div>
        </div>
        <Sidebar />
      </div>
      <Taskbar />
    </div>
  );
}
